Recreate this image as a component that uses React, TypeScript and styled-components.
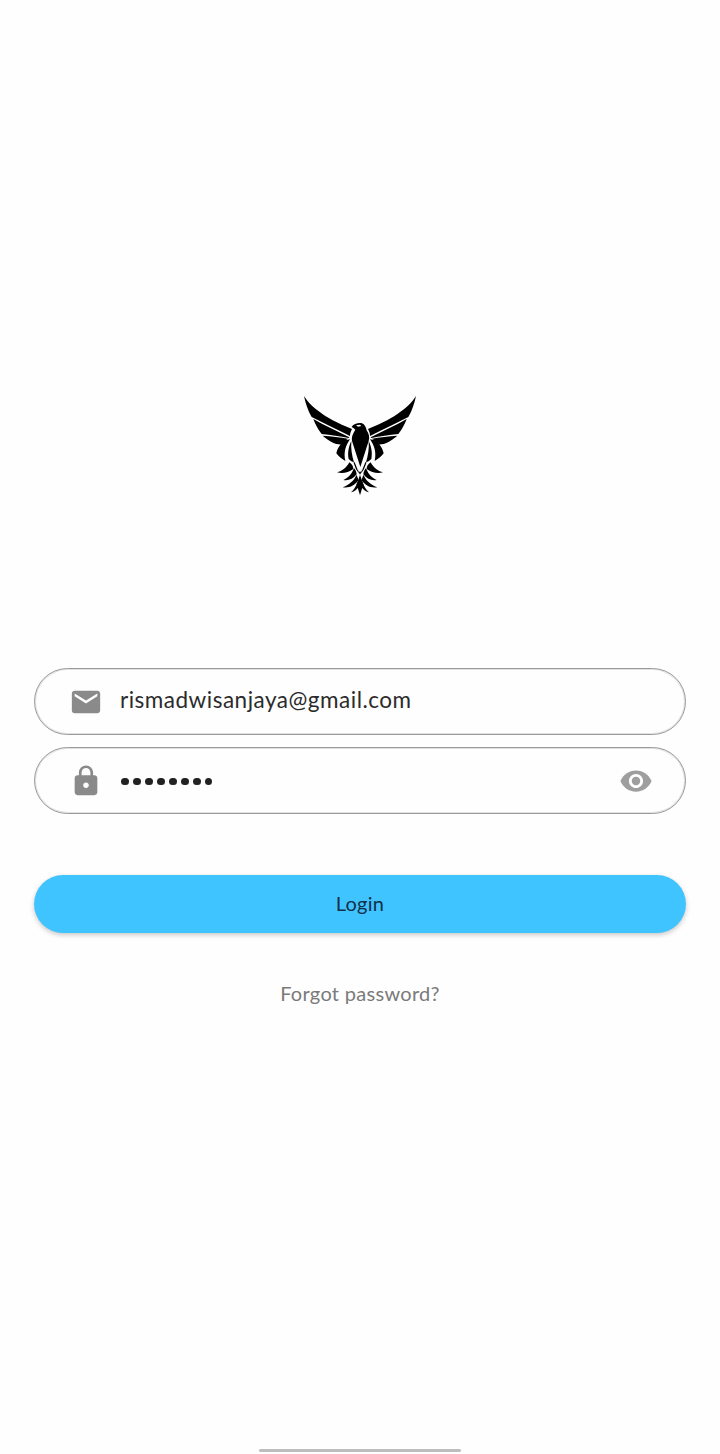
import React from "react";
import styled, { createGlobalStyle } from "styled-components";

const Global = createGlobalStyle`
  html, body { margin: 0; padding: 0; background: #fefefe; }
  * { box-sizing: border-box; }
`;

const Screen = styled.div`
  position: relative;
  width: 720px;
  height: 1454px;
  background: #fefefe;
  font-family: "Lato", "Open Sans", sans-serif;
  overflow: hidden;
  display: flex;
  flex-direction: column;
  align-items: center;
  padding: 385px 34px 0;
`;

const LogoMark = styled.svg`
  display: block;
  width: 140px;
  height: 120px;
  flex: none;
`;

const Form = styled.div`
  width: 100%;
  margin-top: 163px;
  display: flex;
  flex-direction: column;
  gap: 12px;
`;

const Field = styled.div`
  height: 67px;
  border: 1px solid #9a9a9a;
  box-shadow: inset 0 0 0 1px rgba(160, 160, 160, 0.3);
  border-radius: 34px;
  display: flex;
  align-items: center;
  padding: 0 32px 0 34px;
  gap: 17px;
`;

const FieldIcon = styled.svg<{ $color?: string }>`
  width: 34px;
  height: 34px;
  flex: none;
  fill: ${(p) => p.$color ?? "#8a8a8a"};
`;

const FieldText = styled.span`
  flex: 1;
  font-size: 22.5px;
  letter-spacing: 0.5px;
  color: #2b2b2b;
  line-height: 30px;
  position: relative;
  top: -2px;
`;

const Dots = styled.span`
  flex: 1;
  display: flex;
  gap: 4.4px;
  padding-left: 1px;
  position: relative;
  top: 1px;
`;

const Dot = styled.i`
  display: block;
  width: 7.6px;
  height: 7.6px;
  border-radius: 50%;
  background: #222;
`;

const LoginButton = styled.button`
  margin-top: 49px;
  width: 100%;
  height: 58px;
  border: 0;
  border-radius: 29px;
  background: #40c4ff;
  box-shadow: 0 2px 5px rgba(0, 0, 0, 0.22);
  font-family: inherit;
  font-size: 20px;
  letter-spacing: 0.3px;
  color: #12304a;
  padding: 0 0 2px;
`;

const ForgotLink = styled.div`
  margin-top: 35px;
  text-align: center;
  font-size: 20px;
  letter-spacing: 0.3px;
  line-height: 26px;
  color: #7a7a7a;
`;

const HomeBar = styled.div`
  position: absolute;
  left: 259px;
  bottom: 2px;
  width: 202px;
  height: 3px;
  border-radius: 2px;
  background: #bdbdbd;
`;

const wing =
  "M42 33C60 62 100 98 186 132C182 140 180 146 180 153C140 132 100 114 65 96C54 78 47 56 42 33Z" +
  "M70 102C105 122 145 140 178 157L176 159C150 154 122 150 95 147C84 134 76 118 70 102Z" +
  "M98 152C125 154 150 157 174 161C166 166 160 172 156 178C138 180 120 170 98 152Z" +
  "M166 166L180 163C168 180 160 200 166 228C155 222 146 214 139 205C142 190 152 176 166 166Z" +
  "M184 168C176 184 172 204 176 222C180 226 186 230 192 232C186 212 182 190 184 168Z" +
  "M178 232C170 248 156 258 141 262C156 267 174 264 190 252C190 244 186 238 178 232Z" +
  "M192 250C184 270 172 280 160 285C174 288 190 282 200 268C199 260 196 254 192 250Z" +
  "M199 270C192 288 176 300 158 307C178 310 194 302 205 286C204 280 202 274 199 270Z" +
  "M203 290C198 304 192 314 183 322C194 320 203 312 208 302C207 297 205 293 203 290Z" +
  "M194 232L206 262L209 268L200 256C196 248 193 240 190 230Z";

const Logo = () => (
  <LogoMark viewBox="0 0 420 360" aria-label="eagle logo">
    <path fill="#000" d={wing} />
    <g transform="translate(420 0) scale(-1 1)">
      <path fill="#000" d={wing} />
    </g>
    <path
      fill="#000"
      d="M185 125C192 116 206 112 216 115C224 118 228 126 230 136C236 146 240 156 236 168L211 246L186 168C184 156 188 146 196 134C192 129 188 128 185 125Z"
    />
    <path fill="#fefefe" d="M198 121L210 119L214 123L204 125Z" />
    <path fill="#000" d="M210 270L220 298L210 331L200 298Z" />
    <path fill="#000" d="M204 256L210 262L216 256L210 270Z" />
  </LogoMark>
);

const MAIL =
  "M20 4H4c-1.1 0-1.99.9-1.99 2L2 18c0 1.1.9 2 2 2h16c1.1 0 2-.9 2-2V6c0-1.1-.9-2-2-2zm0 4l-8 5-8-5V6l8 5 8-5v2z";
const LOCK =
  "M18 8h-1V6c0-2.76-2.24-5-5-5S7 3.24 7 6v2H6c-1.1 0-2 .9-2 2v10c0 1.1.9 2 2 2h12c1.1 0 2-.9 2-2V10c0-1.1-.9-2-2-2zm-6 9c-1.1 0-2-.9-2-2s.9-2 2-2 2 .9 2 2-.9 2-2 2zm3.1-9H8.9V6c0-1.71 1.39-3.1 3.1-3.1 1.71 0 3.1 1.39 3.1 3.1v2z";
const EYE =
  "M12 4.5C7 4.5 2.73 7.61 1 12c1.73 4.39 6 7.5 11 7.5s9.27-3.11 11-7.5c-1.73-4.39-6-7.5-11-7.5zM12 17c-2.76 0-5-2.24-5-5s2.24-5 5-5 5 2.24 5 5-2.24 5-5 5zm0-8c-1.66 0-3 1.34-3 3s1.34 3 3 3 3-1.34 3-3-1.34-3-3-3z";

export default function App() {
  return (
    <Screen>
      <Global />
      <Logo />
      <Form>
        <Field>
          <FieldIcon viewBox="0 0 24 24"><path d={MAIL} /></FieldIcon>
          <FieldText>rismadwisanjaya@gmail.com</FieldText>
        </Field>
        <Field>
          <FieldIcon viewBox="0 0 24 24"><path d={LOCK} /></FieldIcon>
          <Dots>
            {Array.from({ length: 8 }, (_, i) => (
              <Dot key={i} />
            ))}
          </Dots>
          <FieldIcon viewBox="0 0 24 24" $color="#9e9e9e"><path d={EYE} /></FieldIcon>
        </Field>
        <LoginButton>Login</LoginButton>
        <ForgotLink>Forgot password?</ForgotLink>
      </Form>
      <HomeBar />
    </Screen>
  );
}
